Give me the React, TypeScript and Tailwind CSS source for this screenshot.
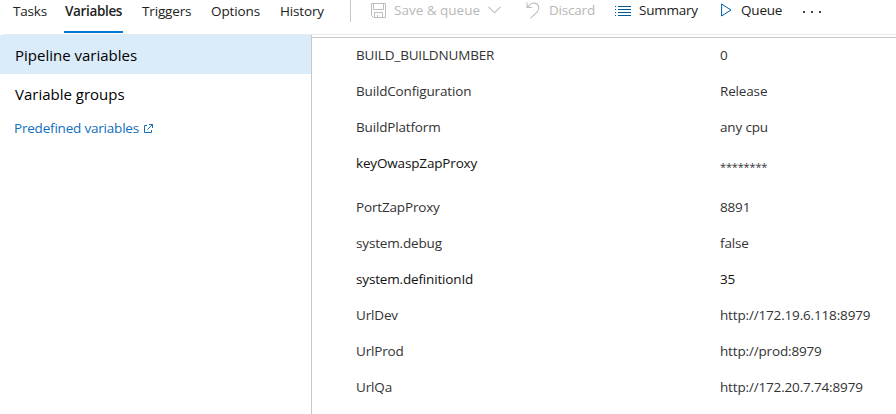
import React from "react";

const tabs = [
  { label: "Tasks", cls: "w-[65px] pl-[13px] tracking-[-0.2px]" },
  { label: "Variables", cls: "w-[77px] font-semibold tracking-[-0.35px]" },
  { label: "Triggers", cls: "w-[69px] tracking-[-0.15px]" },
  { label: "Options", cls: "w-[69px] tracking-[-0.1px]" },
  { label: "History", cls: "w-[57px] tracking-[-0.15px]" },
];

const rows = [
  { name: "BUILD_BUILDNUMBER", value: "0" },
  { name: "BuildConfiguration", value: "Release" },
  { name: "BuildPlatform", value: "any cpu" },
  { name: "keyOwaspZapProxy", value: "********", secret: true },
  { name: "PortZapProxy", value: "8891" },
  { name: "system.debug", value: "false" },
  { name: "system.definitionId", value: "35", dark: true },
  { name: "UrlDev", value: "http://172.19.6.118:8979" },
  { name: "UrlProd", value: "http://prod:8979" },
  { name: "UrlQa", value: "http://172.20.7.74:8979" },
];

function SaveIcon() {
  return (
    <svg className="w-[15px] h-[15px] shrink-0" viewBox="0 0 15 15" fill="none" stroke="#bdbdbd">
      <path d="M.5.5h14v14H2.500L.5 12.500zM2.500.5v6h10v-6M3.500 14.500V9.500h8v5M6.500 12v2.500" />
    </svg>
  );
}

function ChevronIcon() {
  return (
    <svg className="w-[13px] h-[8px] shrink-0" viewBox="0 0 13 8" fill="none" stroke="#bdbdbd" strokeWidth="1.1">
      <path d="M.5.8l6 6 6-6" />
    </svg>
  );
}

function UndoIcon() {
  return (
    <svg className="w-[14px] h-[17px] shrink-0" viewBox="0 0 14 17" fill="none" stroke="#bdbdbd" strokeWidth="1.1">
      <path d="M1 .5v5h5M1 5.5L4.3 2.4C7-.1 12.700 1 12.700 6c0 2-.7 3-2 4.300L4.500 16.300" />
    </svg>
  );
}

function ListIcon() {
  return (
    <svg className="w-[17px] h-[10px] shrink-0" viewBox="0 0 17 10" stroke="#005a9e" shapeRendering="crispEdges">
      <path d="M1 .5h1M1 3.500h1M1 6.500h1M1 9.500h1M4 .5h13M4 3.500h13M4 6.500h13M4 9.500h13" />
    </svg>
  );
}

function PlayIcon() {
  return (
    <svg className="w-[11px] h-[14px] shrink-0" viewBox="0 0 11 14" fill="none" stroke="#005a9e">
      <path d="M.6 1v12L10 7z" />
    </svg>
  );
}

function ExternalIcon() {
  return (
    <svg className="w-[9px] h-[9px] shrink-0" viewBox="0 0 9 9" fill="none" stroke="#106ebe">
      <path d="M3 1.500H.5v7h7V6M5 .5h3.500V4M8.500.5L3.500 5.500" />
    </svg>
  );
}

export default function App() {
  return (
    <div className="flex h-[414px] w-[896px] flex-col overflow-hidden bg-white font-['Open_Sans',sans-serif] text-[13.5px] leading-5 text-[#212121]">
      <header className="flex h-[34px] shrink-0">
        <nav className="flex">
          {tabs.map((t) => (
            <div key={t.label} className={t.cls}>
              <div
                className={
                  t.label === "Variables"
                    ? "h-[33px] w-[59px] -ml-px border-b-2 border-[#0078d4] pl-px pt-px"
                    : "pt-px"
                }
              >
                {t.label}
              </div>
            </div>
          ))}
        </nav>
        <div className="ml-[13px] h-[22px] w-px bg-[#c8c8c8]" />
        <div className="flex h-5 items-center whitespace-nowrap">
          <div className="flex w-[155px] items-center pl-5 text-[#b8b8b8]">
            <SaveIcon />
            <span className="ml-2 w-[94px]">Save &amp; queue</span>
            <ChevronIcon />
          </div>
          <div className="flex w-[108px] items-center pl-5 text-[#b8b8b8]">
            <UndoIcon />
            <span className="ml-[9px] tracking-[-0.2px]">Discard</span>
          </div>
          <div className="flex w-[107px] items-center">
            <div className="pt-px">
              <ListIcon />
            </div>
            <span className="ml-2 tracking-[-0.25px]">Summary</span>
          </div>
          <div className="flex w-[82px] items-center">
            <PlayIcon />
            <span className="ml-[9px] tracking-[-0.2px]">Queue</span>
          </div>
          <div className="mt-1 flex gap-[6px]">
            <i className="size-[2px] bg-[#444]" />
            <i className="size-[2px] bg-[#444]" />
            <i className="size-[2px] bg-[#444]" />
          </div>
        </div>
      </header>
      <div className="ml-[3px] h-px shrink-0 bg-[#eaeaea]" />
      <div className="flex min-h-0 flex-1">
        <aside className="w-[312px] shrink-0 border-r border-[#c8c8c8] text-[15px] text-black">
          <div className="flex h-[39px] items-center bg-[#daebf9] pl-[15px] pt-px">Pipeline variables</div>
          <div className="flex h-[39px] items-center pl-[15px]">Variable groups</div>
          <a className="mt-[5px] flex items-center gap-[5px] pl-[14px] text-[13.5px] text-[#106ebe]">
            <span className="tracking-[-0.2px]">Predefined variables</span>
            <ExternalIcon />
          </a>
        </aside>
        <main className="min-w-0 flex-1 pt-[2px]">
          <div className="h-px bg-[#c8c8c8]" />
          <div className="-mt-px">
            {rows.map((r) => (
              <div
                key={r.name}
                className={`flex pl-11 pt-2 ${r.secret ? "h-11" : "h-9"} ${r.secret || r.dark ? "text-[#111]" : "text-[#333]"}`}
              >
                <span className="w-[364px] tracking-[-0.16px]">{r.name}</span>
                <span className={r.secret ? "pt-1 text-[11px] tracking-[-0.16px] text-[#333]" : "tracking-[-0.16px]"}>
                  {r.value}
                </span>
              </div>
            ))}
          </div>
        </main>
      </div>
    </div>
  );
}
